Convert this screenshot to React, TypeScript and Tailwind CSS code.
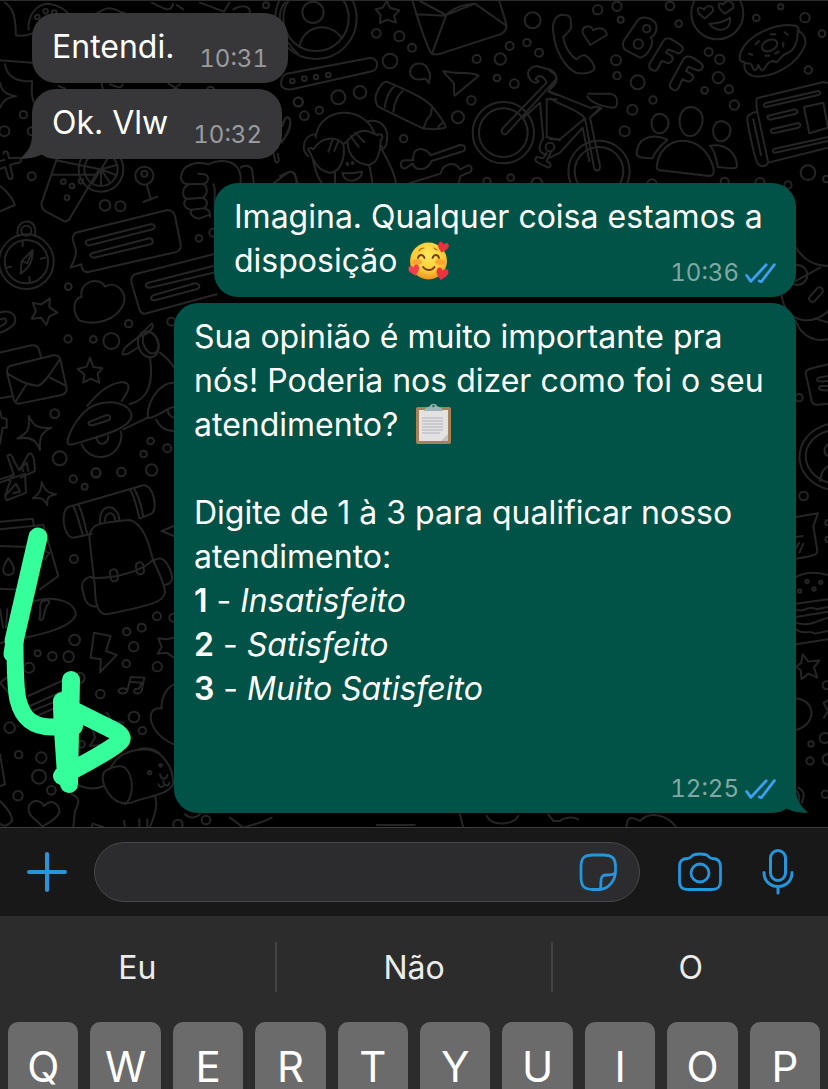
import type { ReactNode } from "react";

type Side = "in" | "out";

function Dots({ items }: { items: number[][] }) {
  return (
    <>
      {items.map(([x, y, r], i) => (
        <circle key={i} cx={x} cy={y} r={r} />
      ))}
    </>
  );
}

function Wallpaper() {
  return (
    <svg
      className="absolute inset-0 h-full w-full"
      viewBox="0 0 828 827"
      preserveAspectRatio="xMinYMin slice"
      fill="none"
      stroke="#252526"
      strokeLinecap="round"
      strokeLinejoin="round"
      strokeWidth="6"
      aria-hidden="true"
    >
      <g transform="scale(.3333)">
        <path d="M15 5C50 30 45 70 48 103C70 108 85 102 98 97M86 85C82 45 110 8 145 8C180 12 200 30 212 45M0 178L96 185M15 190C20 225 50 245 96 240M97 242C92 280 98 300 106 312M0 245C5 270 15 280 48 286C20 290 8 300 0 320" />
        <Dots items={[[112, 48, 7], [137, 31, 7], [163, 35, 7], [70, 341, 11], [13, 391, 15], [95, 391, 12], [95, 526, 12], [798, 13, 9], [632, 268, 11], [895, 303, 14]]} />
        <path d="M10 458C12 448 22 448 24 458L27 472L55 470C66 470 66 483 55 485L30 492L38 525C38 537 27 537 24 527L16 498L0 504M0 480L13 477Z" />
        <path d="M0 555C25 572 42 600 44 612L0 631M170 475L125 605C123 618 130 628 140 633L190 660C200 664 207 657 212 648L296 506M155 521H288M168 478L300 505" />
        <circle cx="303" cy="505" r="67" /><circle cx="303" cy="505" r="50" />
        <path d="M303 505L350 492M303 505L348 522M303 505L330 545M303 505L303 552M303 505L278 545M303 505L325 470" />
        <Dots items={[[190, 542, 7], [216, 555, 7], [243, 541, 7], [201, 590, 7], [433, 524, 27], [433, 518, 9], [315, 613, 16], [361, 616, 15], [597, 712, 10]]} />
        <path d="M440 552L453 596M430 603L472 587M625 490C585 480 552 492 545 518C538 540 550 549 568 550C545 558 545 585 560 594C545 605 555 626 575 626C565 640 585 655 600 652L630 640M568 550L612 548C628 544 628 522 612 520L595 518M560 594L608 590C626 580 622 555 610 550M575 626L612 622C626 612 622 596 610 592M612 622C630 626 632 640 630 648M625 490C670 470 715 480 722 525V548M722 500C735 490 752 495 756 505L762 548M640 550C650 560 640 600 645 620" />
        <path d="M820 548L862 515C872 510 880 512 884 520L894 548M850 370C855 345 873 340 870 370C868 390 852 412 845 425M820 455L826 480C832 490 838 482 836 472L833 458" />
        <path d="M255 42C285 50 300 25 325 22C350 20 370 45 400 38M455 5C490 20 510 40 520 8M600 5L672 32L688 5M700 25C735 5 760 20 745 45M530 12L550 25M855 5C825 40 840 110 895 160" />
        <path d="M175 255L195 262M305 248L308 262M330 250C350 258 365 265 368 250M505 248L535 265M540 250L520 265" />
      </g>
      <g transform="translate(280 0) scale(.3333)">
        <circle cx="108" cy="52" r="122" /><circle cx="108" cy="52" r="98" /><circle cx="99" cy="34" r="32" />
        <path d="M58 138C70 70 150 60 186 112M320 0L330 20L358 28L342 45L348 65L322 56L300 66L302 42L287 25L308 20ZM398 0C415 60 430 110 452 155C460 165 480 160 500 152L660 100C680 92 682 78 678 65L658 0M408 40L498 44L456 158M420 0L498 42L585 8L676 72M498 42C520 20 555 8 585 8" />
        <path d="M20 218L265 172C285 168 292 180 291 192C290 205 285 208 270 212L35 265C10 268 0 255 4 240C6 226 10 222 20 218" />
        <Dots items={[[37, 240, 7], [73, 233, 7], [108, 228, 7], [145, 222, 7], [330, 180, 22], [289, 97, 13], [358, 106, 15], [396, 140, 12], [175, 289, 21], [240, 274, 19], [55, 303, 13], [73, 344, 13], [118, 328, 11], [371, 413, 11], [534, 349, 18], [574, 298, 13], [590, 174, 12], [661, 174, 17], [689, 135, 12], [741, 125, 11], [777, 155, 12], [758, 58, 24], [651, 231, 10], [703, 248, 13], [692, 530, 10], [621, 541, 11], [771, 546, 16]]} />
        <path d="M446 246C438 235 440 230 424 235C398 240 385 220 393 202C405 180 438 183 446 210C455 225 448 235 446 246ZM490 210C540 222 570 210 596 224L524 284C520 270 522 260 522 248C512 232 500 228 490 210ZM288 300C280 285 305 240 320 242C390 272 430 290 455 315C475 340 498 370 497 380C480 385 450 385 428 382L300 320C292 316 288 310 288 300M315 318C315 295 330 265 342 258M340 332C342 305 355 280 368 270M428 382C440 370 432 365 445 350C460 340 450 330 458 318M475 378L490 362" />
        <path d="M107 410C115 320 250 305 285 400M107 400C70 400 60 450 85 465M88 450C80 450 85 435 100 445C125 405 170 405 190 430L202 420C240 375 265 390 290 402C310 395 310 410 302 418C300 470 285 490 265 492C235 490 205 470 202 422M190 430C198 470 180 515 150 515C110 510 100 475 88 450M145 452L158 415M163 450L174 422M236 438L212 405M253 423L225 395M260 362C300 350 330 380 320 425C318 440 308 450 305 435M98 475C105 500 108 525 125 545M305 445C325 480 345 520 348 548M268 492L278 548M188 515C210 520 230 515 246 512C245 545 190 550 188 515M165 515V548" />
        <circle cx="202" cy="489" r="3" /><circle cx="218" cy="486" r="3" />
        <path d="M0 525L30 512C45 512 48 525 50 548M2 420C25 410 35 370 30 355C20 338 8 360 8 375M400 478C395 430 440 440 452 463L540 432C560 430 560 450 542 453L455 480C440 512 405 510 398 488L375 503C355 500 360 475 378 478L400 478M390 546L482 518C490 485 525 480 540 505L565 493C580 495 578 515 560 517L542 525L535 548" />
        <circle cx="670" cy="395" r="92" /><circle cx="670" cy="395" r="73" />
        <path d="M668 382L800 245C790 222 775 220 766 235C785 240 770 252 755 240C735 220 745 198 770 195L815 208C828 215 832 232 825 238L680 398C670 405 660 392 668 382M830 282L805 272L825 240M830 295H800V408L840 418M780 305L790 412C770 440 780 460 800 460M780 305L730 350" />
        <circle cx="810" cy="438" r="13" /><path d="M800 455L790 472L770 468C760 480 766 482 805 500C818 495 810 485 800 480L812 455" />
      </g>
      <g transform="translate(550 0) scale(.3333)">
        <path d="M45 42C15 35 5 70 10 95C15 150 45 200 80 216C105 220 130 215 134 200C130 185 115 165 103 163C90 162 88 170 80 175C60 165 42 130 40 108L50 98C65 85 65 80 62 55C60 45 52 42 45 42ZM121 132L98 96C95 75 120 68 130 88C150 75 170 85 170 102Z" />
        <path d="M222 118L262 60C275 42 300 50 313 62C325 75 320 100 302 110C315 125 295 165 270 170L228 148C218 140 216 130 222 118ZM298 190L340 120C350 105 360 110 395 135C405 145 390 162 380 155L355 145L348 155L365 165C375 175 360 190 350 185L335 180L322 205C315 215 295 205 298 190ZM360 248L400 175C410 160 425 165 455 188C465 200 450 212 440 207L415 197L408 210L425 220C437 230 422 246 410 240L397 235L385 262C375 275 357 262 360 248Z" />
        <circle cx="502" cy="37" r="78" />
        <path d="M465 52C435 35 438 10 462 25C475 5 500 20 485 35ZM525 38C500 20 502 0 520 10C535 -12 558 10 548 22ZM478 68C500 68 520 65 540 50C545 95 495 95 478 68ZM740 75C680 60 590 105 572 155C565 175 572 185 582 182C590 195 595 180 605 192C612 215 620 210 625 192C635 215 642 210 648 195C658 180 665 180 672 180C685 195 688 160 715 155C735 145 745 115 742 98C750 88 745 80 740 75M742 90C760 92 770 115 765 132C745 190 670 230 615 226C590 222 580 205 584 186" />
        <ellipse cx="659" cy="133" rx="24" ry="16" transform="rotate(-25 659 133)" />
        <path d="M617 130L627 120M662 100H676M704 94L714 102M700 125V137M597 158L607 162M646 164H658M676 158L686 152" />
        <Dots items={[[290, 83, 11], [265, 129, 14], [143, 26, 14], [201, 16, 14], [360, 15, 13], [386, 68, 10], [212, 56, 9], [198, 178, 15], [201, 224, 11], [263, 244, 21], [309, 297, 11], [247, 326, 15], [224, 391, 15], [476, 153, 12], [509, 175, 14], [505, 230, 17], [464, 268, 10], [537, 265, 12], [553, 312, 14], [619, 51, 10], [692, 17, 8], [765, 50, 14], [816, 98, 10], [775, 207, 11], [774, 515, 22], [829, 534, 10], [714, 552, 11], [524, 542, 12], [306, 549, 14], [630, 545, 14]]} />
        <path d="M0 210C20 220 28 235 10 255L0 265M0 272L125 322C135 312 155 322 150 320L120 350L150 495C150 515 135 510 132 500L105 352C85 325 40 318 0 292M115 278H180C210 280 205 325 188 320C145 315 115 298 112 285M155 322L120 350M105 352L30 415H0M98 380L30 455L0 470M98 380L118 480" />
        <circle cx="147" cy="511" r="92" /><circle cx="147" cy="511" r="73" />
        <path d="M424 318C375 318 380 405 420 405C458 405 480 325 424 318ZM330 338C295 338 298 397 328 397C358 397 370 345 330 338ZM515 360C480 360 482 420 513 421C540 420 560 370 515 360ZM320 498C330 395 460 390 490 500C494 515 490 525 478 525L330 508C322 506 320 504 320 498ZM352 416C320 400 262 400 260 460C262 470 275 470 308 472C315 450 330 435 352 416ZM480 434C530 425 560 460 561 495C560 505 550 503 503 498C500 475 495 450 480 434Z" />
        <path d="M625 490C615 480 590 360 592 350C595 338 610 335 622 332L655 485C650 495 635 500 625 490ZM622 332C615 290 620 290 635 288L820 243L834 246M655 485L834 440M610 355L633 462M645 307L805 270C815 275 812 280 805 282L648 318C640 318 640 310 645 307ZM655 344L735 325C745 328 745 333 738 338L660 356C652 354 650 348 655 344ZM665 385L745 366C755 370 752 377 745 380L670 397C662 395 660 390 665 385ZM762 318L820 305L834 380L778 397ZM675 443L834 408M675 455L834 420M675 443C665 448 668 455 675 455" />
      </g>
      <g transform="translate(0 180) scale(.3333)">
        <circle cx="79" cy="242" r="82" /><circle cx="79" cy="242" r="65" /><circle cx="79" cy="149" r="15" /><path d="M54 166C40 110 120 105 104 164M65 240L98 207C98 235 95 255 62 278ZM65 240L82 247L98 207M68 179V195M122 233L136 230M19 260L33 257M88 288L90 302" />
        <path d="M232 154L500 88C515 85 522 95 525 105L542 190C545 205 535 213 520 215L265 273C250 276 245 262 244 250L212 260C220 240 232 225 227 205L218 175C218 162 222 157 232 154ZM262 178L452 130C465 128 468 140 458 145L270 193C258 195 252 182 262 178ZM275 217L448 172C460 172 462 185 452 190L282 230C270 228 268 220 275 217Z" />
        <path d="M640 220L410 278C395 282 392 295 396 310L418 385C422 395 430 400 440 397L650 340M640 255L445 305C430 312 440 322 450 320L640 275M460 343L585 307C600 308 602 320 590 325L465 358C450 358 450 348 460 343M245 348C235 300 300 285 315 317C350 295 385 340 370 370C350 420 280 435 238 418C215 395 220 350 245 348ZM150 352L148 378L172 395L148 406L139 432L123 410L95 413L108 390L98 366L124 370ZM270 530L280 558L307 562L293 579L298 605L272 593L250 605L253 580L233 564L260 557Z" />
        <path d="M0 395C30 385 50 400 45 425C35 440 20 448 0 455M0 415C20 408 22 420 15 428L0 437M0 515L95 493C110 490 118 500 122 527M0 652L38 645M30 555L160 523C175 520 180 530 182 540L200 622C200 635 195 638 185 642L58 668C45 670 42 660 40 650L22 580C20 565 22 558 30 555ZM22 578C60 600 80 612 112 614C135 612 160 560 180 535M48 660L78 612M198 615L150 590M0 690L5 710L20 715V740H8L0 788M86 705C100 735 115 745 155 740C120 755 118 775 120 808C112 780 90 765 52 773C85 755 90 745 86 705Z" />
        <path d="M22 825C30 815 38 825 42 840L58 868L85 820C95 810 102 830 103 845L105 870L62 890M70 870C60 860 75 850 80 845L85 870M0 895L42 882L22 825" />
        <path d="M262 675C290 640 320 610 365 603C395 605 390 625 365 660M202 785C205 755 240 690 285 672C330 655 390 665 395 705C390 745 300 765 220 790C210 792 203 790 202 785ZM270 722L320 702C335 702 332 715 325 718L278 733C265 733 262 727 270 722ZM245 790C270 845 345 840 362 780C365 765 365 755 362 752M290 770C292 800 328 790 325 765M370 745L443 710M388 670C450 655 460 600 450 528M368 520C365 505 385 490 410 472M368 520C385 525 400 505 415 500M412 470L455 428C465 435 455 445 440 458L412 470M480 515C500 530 512 540 522 560M522 605C470 605 435 680 445 712C480 705 500 680 522 678M468 715C480 740 500 750 522 750M505 682C500 695 510 708 522 710" />
        <ellipse cx="445" cy="490" rx="30" ry="40" transform="rotate(-20 445 490)" /><ellipse cx="452" cy="485" rx="22" ry="34" transform="rotate(-20 452 485)" />
        <Dots items={[[205, 317, 10], [386, 428, 11], [204, 474, 11], [280, 475, 10], [334, 480, 24], [514, 422, 12], [164, 698, 13], [179, 832, 21], [288, 876, 14], [364, 873, 13], [455, 867, 17], [452, 780, 10], [431, 819, 10], [502, 802, 12], [640, 155, 12]]} />
      </g>
      <g transform="translate(0 470) scale(.3333)">
        <path d="M15 75L38 10M0 35L75 8L78 65L20 88L15 75L48 38L60 62L40 67M125 33C135 60 145 65 168 70C145 75 140 80 142 102C130 80 120 80 98 82C120 68 125 55 125 33ZM205 108L430 43C460 40 475 115 455 128L420 142M275 188L220 200C190 200 180 120 205 108M220 105C235 135 240 170 250 195M235 100C250 130 255 165 262 190M390 55C405 80 412 115 418 142M402 52C418 80 425 110 430 138M300 155C295 95 355 95 358 148M315 150C315 120 345 120 345 146M268 200C270 160 290 155 390 147C430 160 445 210 460 270C480 310 495 350 495 365C490 390 470 400 320 430C290 430 285 390 285 350L268 200ZM275 320C340 325 430 300 460 265M275 317C250 320 240 340 250 365C255 400 275 410 290 405M460 270C480 255 500 260 515 310C520 330 510 340 495 342" />
        <rect x="331" y="295" width="22" height="36" rx="10" transform="rotate(-8 342 313)" /><rect x="409" y="274" width="22" height="36" rx="10" transform="rotate(-8 420 292)" />
        <path d="M0 152L98 143L102 165M0 175L130 162L175 315L120 355M0 225L90 228M0 353L85 358M130 240L148 245L135 265M25 262C5 290 5 310 25 312C50 310 45 285 25 262ZM105 390C180 370 225 400 228 430C215 480 70 500 0 517M118 445C125 425 115 405 125 392C155 380 150 395 140 405C130 425 135 440 125 447ZM0 415L10 470M22 415L18 470M282 485L332 495L318 540L350 552L300 604L303 565L272 560ZM485 180L522 165M485 180L522 195M522 500L500 505L475 502L485 528L473 548L500 545L522 560M355 660C360 648 380 650 382 660L392 618L433 620L425 660C415 675 395 665 405 655L418 652L425 635L388 632M382 660C378 670 358 670 355 660M20 620L0 635L30 670M85 675L240 605C260 610 255 630 245 635L90 705M100 718L195 680M110 735L190 700M320 725L335 750L370 755M275 765L285 800L270 825L320 820M522 640C500 650 482 680 485 712C430 705 445 790 522 820" />
        <path d="M330 895C350 850 390 835 440 835C490 840 520 890 520 940C500 975 440 975 395 995C330 1010 300 930 310 910C315 890 360 880 375 890C405 920 400 980 375 1000M410 838C430 825 470 835 480 850M480 910C485 930 500 925 502 912M490 930L492 938M475 940C480 955 495 945 492 938C500 950 510 940 508 935M232 940C260 955 290 955 312 945M215 970C245 980 235 1000 225 1020L220 1070M465 975C475 1000 465 1030 450 1068M275 1070L278 1058L310 1068M372 1050L375 1068M418 1045V1068M442 1045V1068M127 1067C105 1040 80 1035 87 1005C100 980 125 990 132 1005C155 980 180 1000 178 1025C170 1045 145 1055 127 1067ZM0 850L15 940L0 945M0 990C20 1010 38 1030 36 1050C25 1065 10 1068 0 1058" />
        <circle cx="449" cy="905" r="5" /><circle cx="482" cy="883" r="4" />
        <Dots items={[[220, 24, 11], [254, 47, 9], [288, 5, 13], [222, 264, 12], [471, 436, 12], [425, 470, 12], [380, 482, 11], [401, 527, 14], [379, 578, 11], [472, 587, 14], [224, 507, 16], [206, 557, 16], [157, 556, 13], [113, 547, 9], [87, 590, 15], [301, 669, 13], [402, 738, 16], [427, 779, 11], [29, 770, 16], [56, 851, 11], [124, 860, 16], [117, 917, 21], [154, 958, 13], [54, 974, 14], [245, 820, 10], [534, 1060, 14], [618, 1047, 13], [520, 440, 12]]} />
        <path d="M555 1030C570 1045 590 1040 600 1030M690 1040L730 1070C760 1060 790 1055 815 1040M1130 1062H1245M1380 1030L1390 1070M1460 1035C1480 1070 1540 1060 1555 1035M1645 1030L1660 1050H1680C1690 1040 1720 1035 1735 1045M1880 1070C1880 1030 1900 1040 1920 1050C1950 1020 2000 1030 2030 1070" />
      </g>
      <g transform="translate(760 240) scale(.3333)">
        <path d="M105 15C130 60 170 75 204 75M108 120L180 80M65 165C80 250 160 255 204 210" /><circle cx="112" cy="102" r="30" /><rect x="158" y="135" width="20" height="52" rx="10" transform="rotate(42 168 161)" />
      </g>
      <g transform="translate(760 280) scale(.3333)">
        <path d="M108 120C120 160 160 185 204 175M165 112L204 125M204 250L145 265C135 270 136 280 140 290L155 360C160 375 170 372 204 368M204 285L175 290C165 298 170 304 204 300M204 315H182C172 320 175 330 204 328" />
        <path d="M204 430C90 460 90 595 204 625M204 450C115 475 115 575 204 605M204 490C190 500 190 520 204 525M180 600C185 570 190 565 204 555M108 708L174 697L160 735L172 810C172 822 160 825 108 833M108 768L128 765M130 788L118 815M108 800L118 785M108 888C140 870 180 875 204 882M108 968L204 955M108 985C130 1000 140 970 170 985L204 978M108 1008L204 992M108 1025C150 1040 180 1015 204 1010M108 1045C130 1065 145 1045 165 1058L204 1050M108 1090L204 1075M128 1120L145 1142L178 1138L162 1160L172 1190L145 1178L125 1195L122 1168L108 1158L124 1145ZM108 1252C170 1260 170 1330 108 1347M190 1265L204 1258M190 1265L204 1290L192 1310" />
        <Dots items={[[117, 350, 11], [131, 645, 13], [204, 725, 8], [204, 775, 8], [141, 901, 5], [182, 904, 5], [162, 924, 5], [119, 930, 5], [200, 1213, 12], [153, 1389, 8], [194, 1371, 15], [150, 1440, 11], [204, 1435, 16], [196, 1540, 11]]} />
        <path d="M115 1520C140 1535 130 1550 125 1566M90 1520C120 1525 120 1550 115 1566M0 1532C20 1520 60 1530 70 1566" />
      </g>
    </svg>
  );
}

function Tail({ side }: { side: Side }) {
  return (
    <svg
      viewBox="0 0 42 30"
      className={
        side === "in"
          ? "absolute bottom-0 -left-3 h-[30px] w-[42px] text-[#37373a]"
          : "absolute -right-3 bottom-0 h-[30px] w-[42px] -scale-x-100 text-[#015247]"
      }
      aria-hidden="true"
    >
      <path d="M12 0V6C12 16 8 23 0 29.500C9 30.500 16 28 22 25.500L28 29L42 20V0Z" fill="currentColor" />
    </svg>
  );
}

function Ticks() {
  return (
    <svg viewBox="315 64 95 64" className="h-[21px] w-[31px]" fill="none" stroke="#3f9ff2" strokeWidth="8.500" strokeLinecap="round" strokeLinejoin="round" aria-label="Lida">
      <path d="M320 102L333 120L380 69M359 119L365 121L405 69" />
    </svg>
  );
}

function Bubble({ side, time, tail, className, children }: { side: Side; time: string; tail?: boolean; className: string; children: ReactNode }) {
  const out = side === "out";
  return (
    <article
      className={`relative rounded-[24px] px-5 pt-3 pb-3.5 text-[32px] leading-[44px] whitespace-nowrap text-white ${
        out ? "grid self-end bg-[#015247]" : "flex justify-between self-start bg-[#37373a]"
      } ${className}`}
    >
      {tail && <Tail side={side} />}
      <div className="relative col-start-1 row-start-1">{children}</div>
      <div className={`relative col-start-1 row-start-1 flex h-5 items-center gap-1.5 self-end justify-self-end text-2xl tabular-nums ${out ? "text-[#80a9a3]" : "text-[#9b9b9e]"}`}>
        <time>{time}</time>
        {out && <Ticks />}
      </div>
    </article>
  );
}

function LoveFace() {
  const heart = "M0 7C-3 4-7 1-6-3C-5-7-1-6 0-3C2-7 6-6 6.500-2.500C7 1 3 4 0 7Z";
  return (
    <svg viewBox="0 0 42 42" className="ml-0.5 inline-block h-[42px] w-[42px] align-[-10px]" role="img" aria-label="Rosto sorridente com corações">
      <defs>
        <radialGradient id="face" cx="50%" cy="35%" r="65%">
          <stop offset="0" stopColor="#ffe85c" />
          <stop offset=".65" stopColor="#fdcb35" />
          <stop offset="1" stopColor="#ee9020" />
        </radialGradient>
      </defs>
      <circle cx="20.500" cy="21" r="18.500" fill="url(#face)" />
      <ellipse cx="9" cy="22" rx="5" ry="3" fill="#f8812f" opacity=".55" />
      <ellipse cx="32" cy="22" rx="5" ry="3" fill="#f8812f" opacity=".55" />
      <path d="M10 18C11 14 15 14 16.500 18M24.500 18C26 14 30 14 31 18M15 27C18 31 24 31 26.500 27" fill="none" stroke="#6f3b10" strokeWidth="1.800" strokeLinecap="round" />
      <path d="M11 11C12 9 14 8 16 8M26 8L29 10" fill="none" stroke="#b56d12" strokeWidth="1.200" strokeLinecap="round" />
      <path d={heart} transform="translate(35 7) rotate(12) scale(.85)" fill="#e83440" />
      <path d={heart} transform="translate(6 30) rotate(-15) scale(.85)" fill="#f0404a" />
      <path d={heart} transform="translate(34 33.500) rotate(12) scale(.95)" fill="#e83440" />
    </svg>
  );
}

function Clipboard() {
  return (
    <svg viewBox="0 0 42 42" className="ml-1.5 inline-block h-[42px] w-[42px] align-[-9px]" role="img" aria-label="Prancheta">
      <rect x="3" y="4" width="35" height="37" rx="2" fill="#a5825a" />
      <rect x="6" y="7" width="29" height="31" fill="#e2e2e2" />
      <path d="M35 31V38H28Z" fill="#c4c4c4" />
      <path d="M9 15H30M9 18H30M9 21H30M9 24H30M9 27H30M9 30H27" stroke="#cacace" strokeWidth="2" />
      <path d="M11 8C11 5 15 4 17 3C18 0 23 0 24 3C26 4 30 5 30 8Z" fill="#9eb3b5" />
      <circle cx="20.500" cy="3" r="1.300" fill="#2e6e66" />
    </svg>
  );
}

function DrawnArrow() {
  return (
    <svg viewBox="0 0 140 280" className="pointer-events-none absolute top-[519px] left-0 h-[280px] w-[140px]" fill="none" stroke="#35ff9a" strokeWidth="18" strokeLinecap="round" strokeLinejoin="round" aria-hidden="true">
      <path d="M38 17L14 121L12 134M15 120C15 145 15 168 18 180C23 200 34 207 52 207H74" strokeWidth="17" />
      <path d="M38 17L14 121" strokeWidth="19" />
      <path d="M71 160L69 264M62 181C62 210 65 230 66 258M74 190V206M77 192L115 211C123 216 124 219 117 224C104 234 84 244 62 256" />
      <path d="M66 180V255" />
    </svg>
  );
}

const suggestions = ["Eu", "Não", "O"];
const keys = ["Q", "W", "E", "R", "T", "Y", "U", "I", "O", "P"];

export default function App() {
  return (
    <div className="flex h-screen flex-col overflow-hidden bg-black font-['Inter','Noto_Sans',sans-serif]">
      <main className="relative flex flex-1 flex-col gap-1.5 overflow-hidden border-t border-[#2c2c2c] px-8 pt-3 pb-3.5">
        <Wallpaper />
        <Bubble side="in" time="10:31" className="w-64">Entendi.</Bubble>
        <Bubble side="in" time="10:32" tail className="w-[250px]">Ok. Vlw</Bubble>
        <Bubble side="out" time="10:36" className="mt-[18px] w-[582px]">
          <p>
            Imagina. Qualquer coisa estamos a<br />
            disposição <LoveFace />
          </p>
        </Bubble>
        <Bubble side="out" time="12:25" tail className="w-[622px]">
          <p>
            Sua opinião é muito importante pra<br />
            nós! Poderia nos dizer como foi o seu<br />
            atendimento? <Clipboard />
          </p>
          <p className="mt-11 mb-[88px]">
            Digite de 1 à 3 para qualificar nosso<br />
            atendimento:<br />
            <strong className="font-semibold">1</strong> - <em>Insatisfeito</em><br />
            <strong className="font-semibold">2</strong> - <em>Satisfeito</em><br />
            <strong className="font-semibold">3</strong> - <em>Muito Satisfeito</em>
          </p>
        </Bubble>
        <DrawnArrow />
      </main>

      <form className="flex shrink-0 items-center border-t border-[#3d3d3e] bg-[#181818] py-3.5 pr-[34px] pl-[27px] text-[#2496dc]" onSubmit={(e) => e.preventDefault()}>
        <button type="button" className="shrink-0" aria-label="Anexar">
          <svg viewBox="0 0 40 40" className="size-10" fill="none" stroke="currentColor" strokeWidth="4" strokeLinecap="round"><path d="M20 2V38M2 20H38" /></svg>
        </button>
        <div className="ml-[27px] flex h-[60px] min-w-0 flex-1 items-center rounded-full border border-[#48484a] bg-[#2c2c2e] pr-[22px] pl-6">
          <input aria-label="Mensagem" className="w-full min-w-0 flex-1 bg-transparent text-[32px] text-white outline-none" />
          <button type="button" className="shrink-0" aria-label="Figurinhas">
            <svg viewBox="0 0 38 38" className="size-[38px]" fill="none" stroke="currentColor" strokeWidth="2.800" strokeLinejoin="round">
              <path d="M21 36.500H14C5 36.500 2 33 2 24V14C2 5 5 2 14 2H24C33 2 36.500 5 36.500 14V18C36.500 27 30 36 21 36.500ZM21 36.500C22.500 34 21.500 31 22 27.500C22.500 23 24 22 28 22C32 22 34 22 36.200 20" />
            </svg>
          </button>
        </div>
        <button type="button" className="ml-[38px] shrink-0" aria-label="Câmera">
          <svg viewBox="0 0 44 40" className="h-10 w-11" fill="none" stroke="currentColor" strokeWidth="2.800" strokeLinejoin="round">
            <path d="M9.500 6.500C12 6.500 12.500 5.500 14 4C15.500 2.300 17 2 22 2C27 2 28.500 2.300 30 4C31.500 5.500 32 6.500 34.500 6.500C40 6.500 42.500 9 42.500 15V29C42.500 35 40 37.500 34 37.500H10C4 37.500 1.500 35 1.500 29V15C1.500 9 4 6.500 9.500 6.500Z" />
            <circle cx="22" cy="21" r="9" />
          </svg>
        </button>
        <button type="button" className="ml-10 shrink-0" aria-label="Gravar áudio">
          <svg viewBox="0 0 32 46" className="h-[46px] w-8" fill="none" stroke="currentColor" strokeWidth="3" strokeLinecap="round">
            <rect x="8.500" y="1.500" width="15" height="30" rx="7.500" /><path d="M2 23.500C2 32 8 37.500 16 37.500C24 37.500 30 32 30 23.500M16 37.500V44" />
          </svg>
        </button>
      </form>

      <section aria-label="Teclado" className="shrink-0 bg-[#2c2c2c]">
        <div className="flex items-center divide-x-2 divide-[#434343] pt-[26px] pb-[30px]">
          {suggestions.map((word) => (
            <button key={word} type="button" className="h-[50px] flex-1 pt-0.5 text-[32px] text-[#ececec]">{word}</button>
          ))}
        </div>
        <div className="flex gap-3 px-2">
          {keys.map((key) => (
            <button key={key} type="button" className="flex h-[67px] flex-1 justify-center rounded-t-[10px] bg-[#6b6b6b] pt-[22px] text-[42px] leading-[45px] text-white">{key}</button>
          ))}
        </div>
      </section>
    </div>
  );
}
